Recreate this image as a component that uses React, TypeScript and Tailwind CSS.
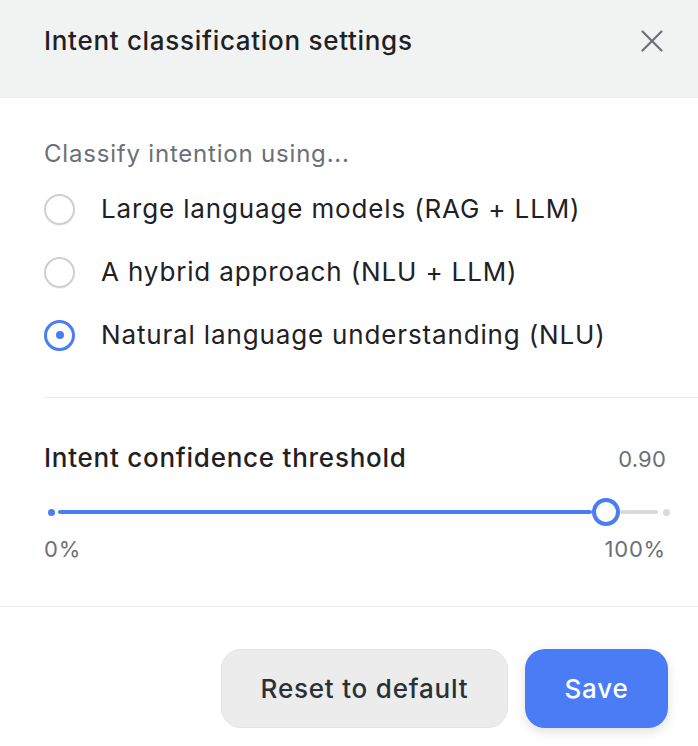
import React from "react";

const options = [
  { label: "Large language models (RAG + LLM)", selected: false },
  { label: "A hybrid approach (NLU + LLM)", selected: false },
  { label: "Natural language understanding (NLU)", selected: true },
];

export default function App() {
  return (
    <div
      className="w-[698px] h-[746px] bg-white overflow-hidden text-[#1f2124]"
      style={{ fontFamily: "Inter, 'Noto Sans', sans-serif" }}
    >
      <div className="h-[98px] bg-[#f1f2f2] flex items-start justify-between pl-[44px] pr-[30px] pt-[25px]">
        <h1 className="text-[26px] leading-[32px] font-medium tracking-[0.7px]">
          Intent classification settings
        </h1>
        <button className="w-[32px] h-[32px] flex items-center justify-center text-[#6b7078]">
          <svg width="22" height="22" viewBox="0 0 22 22" fill="none" stroke="currentColor" strokeWidth="2.2" strokeLinecap="round">
            <path d="M1.5 1.5L20.5 20.5M20.5 1.5L1.5 20.5" />
          </svg>
        </button>
      </div>

      <div className="pl-[44px] pt-[40px]">
        <p className="text-[24px] leading-[32px] text-[#6b7078] tracking-[0.8px]">Classify intention using...</p>
        <div className="flex flex-col gap-[31px] mt-[23px] pb-[46px] border-b border-[#ececec]">
          {options.map((o) => (
            <label key={o.label} className="flex items-center gap-[26px] h-[32px]">
              {o.selected ? (
                <span className="w-[31px] h-[31px] rounded-full border-[3px] border-[#4a7cf5] flex items-center justify-center shrink-0">
                  <span className="w-[8px] h-[8px] rounded-full bg-[#4a7cf5]" />
                </span>
              ) : (
                <span className="w-[31px] h-[31px] rounded-full border-2 border-[#cfcfcf] shrink-0 shadow-[0_1px_1px_rgba(0,0,0,0.05)]" />
              )}
              <span className="text-[26px] leading-[32px] tracking-[0.85px]">{o.label}</span>
            </label>
          ))}
        </div>
      </div>

      <div className="pl-[44px] pr-[32px] pt-[44px] pb-[43px] border-b border-[#ececec]">
        <div className="flex items-baseline justify-between">
          <span className="text-[26px] leading-[32px] font-medium tracking-[0.75px]">Intent confidence threshold</span>
          <span className="text-[22px] text-[#6b7078] tracking-[0.2px]">0.90</span>
        </div>
        <div className="mt-[24px] h-[24px] flex items-center">
          <span className="w-[7px] h-[7px] rounded-full bg-[#4a7cf5] shrink-0 ml-[4px]" />
          <span className="h-[4px] bg-[#4a7cf5] rounded-full ml-[3px] w-[534px]" />
          <span className="w-[28px] h-[28px] rounded-full border-[4px] border-[#4a7cf5] bg-white shrink-0" />
          <span className="h-[4px] bg-[#d9d9d9] rounded-full flex-1" />
          <span className="w-[7px] h-[7px] rounded-full bg-[#d9d9d9] shrink-0 ml-[5px] mr-[-4px]" />
        </div>
        <div className="flex justify-between text-[22px] leading-[28px] text-[#6b7078] mt-[11px] tracking-[0.8px]">
          <span>0%</span>
          <span>100%</span>
        </div>
      </div>

      <div className="flex justify-end gap-[17px] pr-[30px] pt-[42px]">
        <button className="w-[287px] h-[79px] rounded-[20px] bg-[#ececec] border border-[#e3e3e3] text-[26px] font-medium text-[#2b3036] tracking-[0.8px]">
          Reset to default
        </button>
        <button className="w-[143px] h-[79px] rounded-[20px] bg-[#4a7cf5] text-white text-[26px] font-medium tracking-[0.8px] shadow-[0_4px_12px_rgba(0,0,0,0.12)]">
          Save
        </button>
      </div>
    </div>
  );
}
